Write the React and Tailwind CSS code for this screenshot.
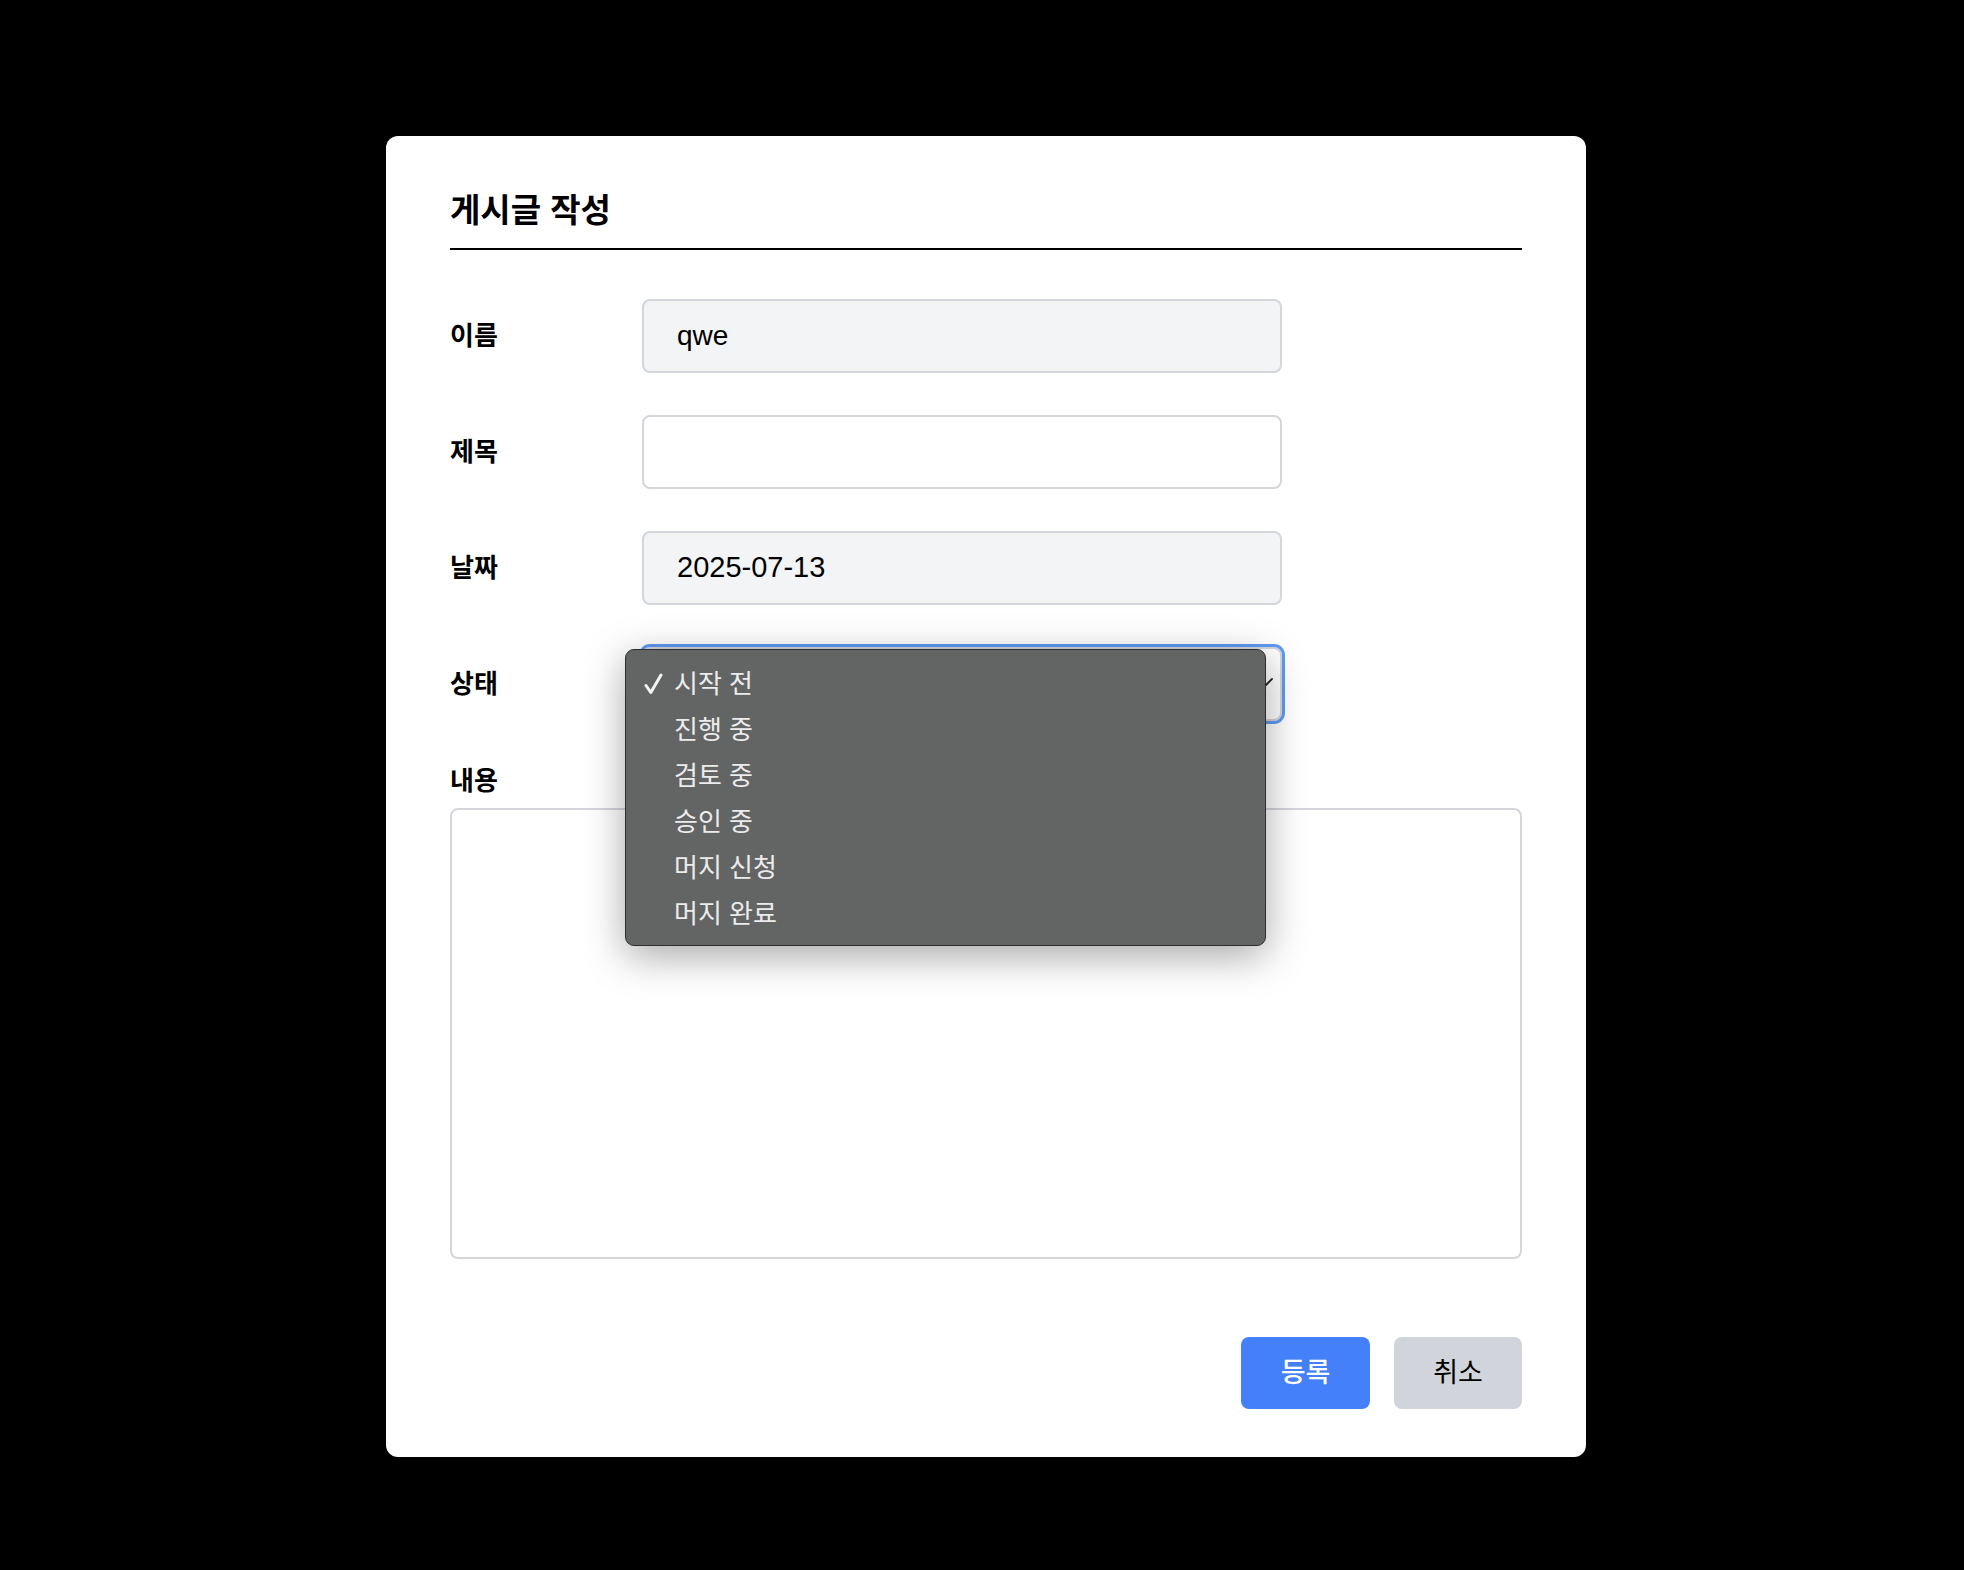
import { useState } from 'react';

const statuses = ['시작 전', '진행 중', '검토 중', '승인 중', '머지 신청', '머지 완료'];

const font = { fontFamily: '"Liberation Sans", "Noto Sans CJK KR", sans-serif' };

function Row({ label, children }) {
  return (
    <div className="flex items-center">
      <label className="w-[192px] shrink-0 text-[26px] font-bold text-black">{label}</label>
      {children}
    </div>
  );
}

function StatusMenu({ selected }) {
  return (
    <div className="absolute left-[-19px] top-0 z-10 h-[297px] w-[641px] rounded-[9px] border border-[#2e2e2e] bg-[#636464] pt-[11px] shadow-[0_10px_40px_rgba(0,0,0,0.35)]">
      {statuses.map((s) => (
        <div key={s} className="relative flex h-[46px] items-center pl-[48px] text-[26px] text-[#ececec]">
          {s === selected && (
            <svg className="absolute left-[18px] top-[12px] h-[22px] w-[19px]" viewBox="0 0 19 22" fill="none">
              <path d="M2 12.5 L6.8 19.5 L17 2" stroke="#f4f4f4" strokeWidth="3" strokeLinecap="round" strokeLinejoin="round" />
            </svg>
          )}
          {s}
        </div>
      ))}
    </div>
  );
}

export default function App() {
  const [status] = useState('시작 전');

  return (
    <div className="flex min-h-[1570px] w-full justify-center bg-black pl-2 pt-[136px]" style={font}>
      <div className="h-[1321px] w-[1200px] rounded-xl bg-white px-16 pt-[53px]">
        <h2 className="border-b-2 border-black pb-[15px] text-[33px] font-bold leading-[44px] text-black">
          게시글 작성
        </h2>

        <div className="mt-[49px] flex flex-col gap-[42px]">
          <Row label="이름">
            <div className="flex h-[74px] w-[640px] items-center rounded-lg border-2 border-[#d4d6dc] bg-[#f3f4f6] pl-[33px] text-[28px] text-black">
              qwe
            </div>
          </Row>
          <Row label="제목">
            <div className="h-[74px] w-[640px] rounded-lg border-2 border-[#d4d6dc] bg-white" />
          </Row>
          <Row label="날짜">
            <div className="flex h-[74px] w-[640px] items-center rounded-lg border-2 border-[#d4d6dc] bg-[#f3f4f6] pl-[33px] text-[29px] text-black">
              2025-07-13
            </div>
          </Row>
          <Row label="상태">
            <div className="relative h-[74px] w-[640px] rounded-lg border-2 border-[#d4d6dc] bg-white outline-[3px] outline-[#5d9bf5] outline-solid">
              <svg className="absolute right-[6px] top-[28px] h-[10px] w-[16px]" viewBox="0 0 16 10" fill="none">
                <path d="M2 2 L8 8 L14 2" stroke="#222" strokeWidth="1.8" strokeLinecap="round" strokeLinejoin="round" />
              </svg>
              <StatusMenu selected={status} />
            </div>
          </Row>
        </div>

        <label className="mt-[43px] block text-[26px] font-bold leading-[34px] text-black">내용</label>
        <div className="mt-[10px] h-[451px] w-full rounded-lg border-2 border-[#d4d6dc] bg-white" />

        <div className="mt-[78px] flex justify-end gap-6">
          <button className="h-[72px] w-[129px] rounded-lg bg-[#4580fb] text-[27px] font-medium text-white">
            등록
          </button>
          <button className="h-[72px] w-[128px] rounded-lg bg-[#d1d5db] text-[27px] text-black">
            취소
          </button>
        </div>
      </div>
    </div>
  );
}
